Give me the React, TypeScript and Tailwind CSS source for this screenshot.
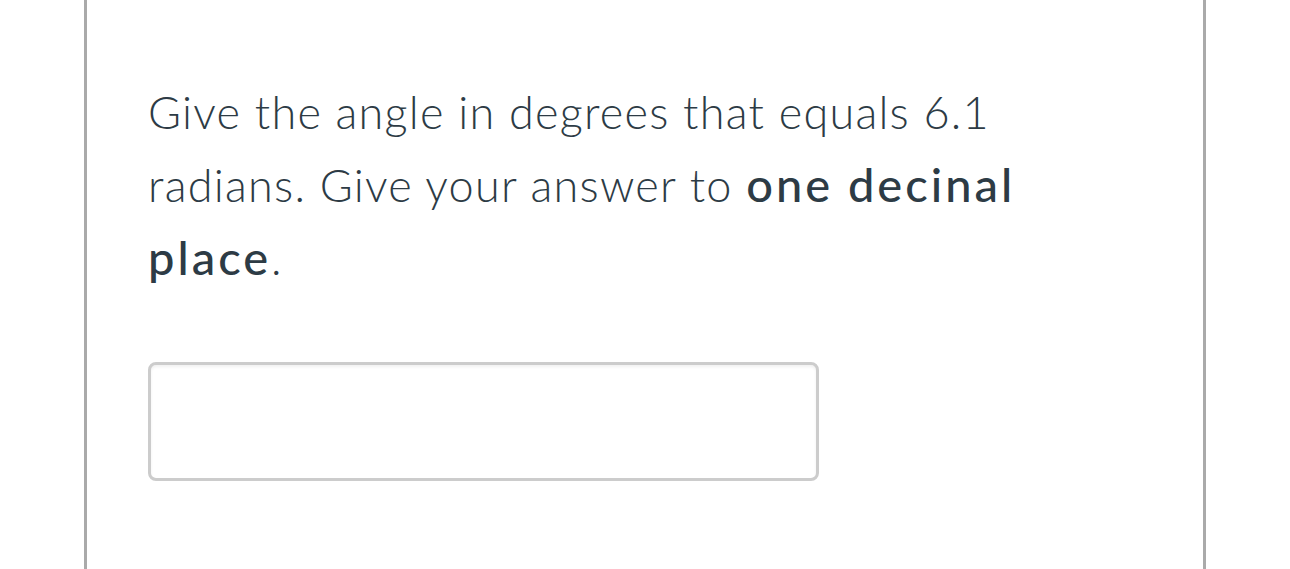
import React from "react";

export default function App() {
  return (
    <div className="w-full h-[569px] bg-white overflow-hidden">
      <div className="ml-[84px] w-[1122px] h-full border-x-[3px] border-[#aaaaaa] pl-[61px] pt-[76px]">
        <p
          className="text-[45px] leading-[72px] text-[#2d3b45] font-light tracking-[1.25px] w-[900px]"
          style={{ fontFamily: "Lato, 'Open Sans', sans-serif" }}
        >
          Give the angle in degrees that equals 6.1 radians. Give your answer to{" "}
          <strong className="font-medium text-[47px] leading-[72px] tracking-[3px]">one decinal place</strong>.
        </p>
        <div className="mt-[68px] w-[671px] h-[119px] rounded-[8px] border-[3px] border-[#cccccc] bg-white shadow-[inset_0_2px_3px_rgba(0,0,0,0.06)]" />
      </div>
    </div>
  );
}
